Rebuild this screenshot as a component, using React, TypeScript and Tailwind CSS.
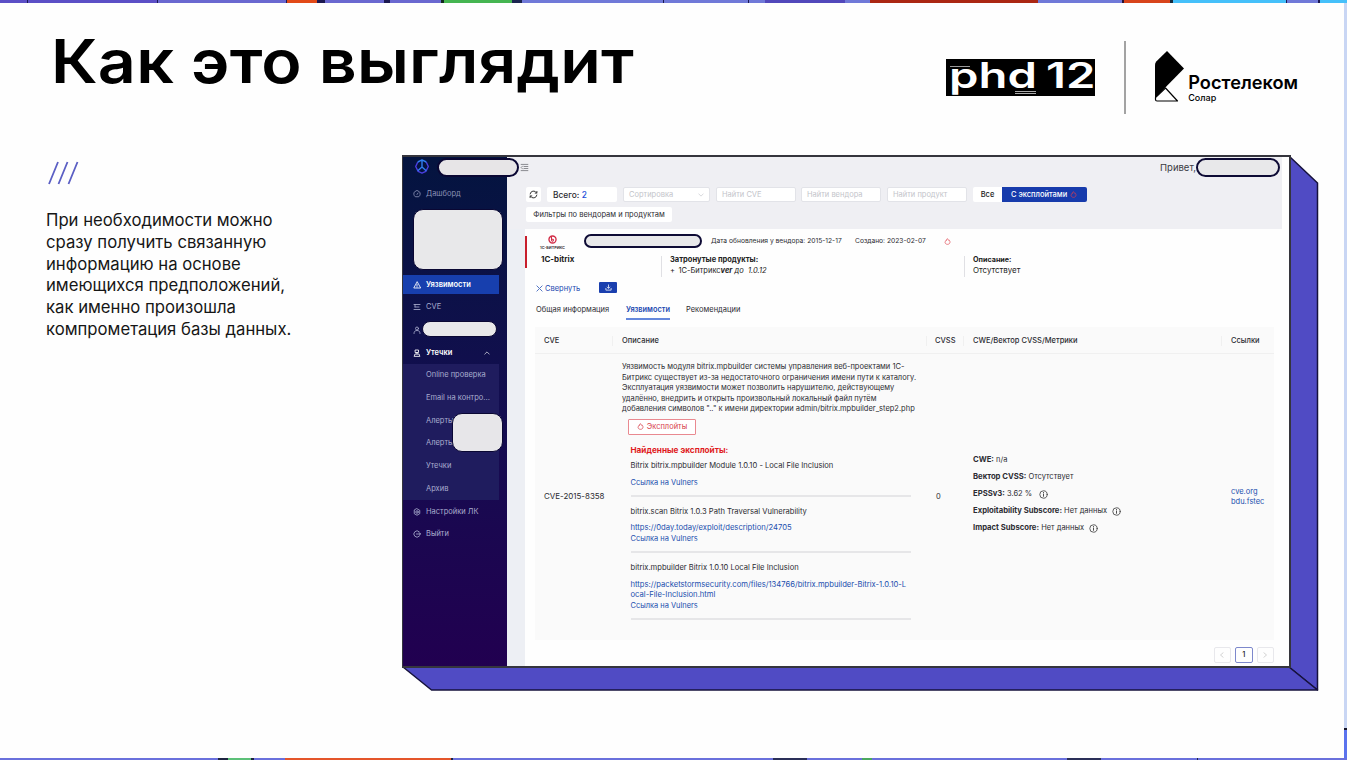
import type { ReactNode } from "react";

const topStrip = [
  "w-[27px] bg-[#5c4fc6]",
  "w-[1px] bg-[#1b1850]",
  "w-[129px] bg-[#5c4fc6]",
  "w-[1px] bg-[#1b1850]",
  "w-[128px] bg-[#6a68d0]",
  "w-[1px] bg-[#1b1850]",
  "w-[30px] bg-[#e24a18]",
  "w-[8px] bg-[#1b1850]",
  "w-[59px] bg-[#6a68d0]",
  "w-[6px] bg-[#1b1850]",
  "w-[51px] bg-[#6a68d0]",
  "w-[3px] bg-[#122b1c]",
  "w-[68px] bg-[#45b551]",
  "w-[10px] bg-[#1b2550]",
  "w-[141px] bg-[#7079d8]",
  "w-[1px] bg-[#1b1850]",
  "w-[84px] bg-[#7079d8]",
  "w-[1px] bg-[#1b1850]",
  "w-[16px] bg-[#7079d8]",
  "w-[80px] bg-[#5248bb]",
  "w-[25px] bg-[#7079d8]",
  "w-[168px] bg-[#ab2713]",
  "w-[84px] bg-[#7079d8]",
  "w-[2px] bg-[#2a1230]",
  "w-[46px] bg-[#d8441b]",
  "w-[3px] bg-[#14293c]",
  "w-[113px] bg-[#45c0fa]",
  "w-[1px] bg-[#1b1850]",
  "w-[31px] bg-[#7079d8]",
  "w-[2px] bg-[#1b1850]",
  "w-[27px] bg-[#45c0fa]",
];

const bottomStrip = [
  "w-[218px] bg-[#6a70dc]",
  "w-[10px] bg-[#1d2440]",
  "w-[23px] bg-[#5cc078]",
  "w-[3px] bg-[#1d2440]",
  "w-[31px] bg-[#6a70dc]",
  "w-[166px] bg-[#e4552a]",
  "w-[2px] bg-[#1d2440]",
  "w-[320px] bg-[#6a70dc]",
  "w-[34px] bg-[#2a2f58]",
  "w-[55px] bg-[#6a70dc]",
  "w-[10px] bg-[#4ba85e]",
  "w-[195px] bg-[#6a70dc]",
  "w-[34px] bg-[#2a2f58]",
  "w-[96px] bg-[#6a70dc]",
  "w-[1px] bg-[#1d2440]",
  "w-[149px] bg-[#6a70dc]",
];

function Stroke({ children, className }: { children: ReactNode; className: string }) {
  return (
    <svg viewBox="0 0 16 16" fill="none" stroke="currentColor" strokeWidth="1.7" strokeLinecap="round" strokeLinejoin="round" className={`shrink-0 ${className}`}>
      {children}
    </svg>
  );
}

function Info() {
  return (
    <Stroke className="h-[9px] w-[9px] text-[#444]">
      <circle cx="8" cy="8" r="6.6" strokeWidth="1.5" />
      <path d="M8 7.2v4M8 4.4v.6" />
    </Stroke>
  );
}

function Fire({ className }: { className: string }) {
  return (
    <Stroke className={className}>
      <path d="M5 5.500C6 5 7.200 3.500 7.500 1.500c2.500 1.500 3 3 3.300 4.200l1.200-.7c1.600 2 2 4 1.500 5.800-.7 2.300-2.800 3.700-5.500 3.700s-4.900-1.400-5.500-3.700C2 9 3.500 7 5 5.500z" />
    </Stroke>
  );
}

function MenuRow({ icon, label, active, bold, dim, arrow }: { icon?: ReactNode; label: string; active?: boolean; bold?: boolean; dim?: boolean; arrow?: boolean }) {
  return (
    <div className={`flex h-[22.7px] items-center ${active || bold ? "font-semibold text-white" : dim ? "text-[#8a90b4]" : "text-[#a9acce]"}`}>
      <div className={`flex w-[96px] items-center pl-[10px] ${active ? "h-[19px] bg-[#173fae]" : "h-full"}`}>
        <span className="w-[13px] shrink-0">{icon}</span>
        <span className="w-[62px] whitespace-nowrap">{label}</span>
        {arrow && (
          <Stroke className="ml-[-4px] h-[6px] w-[6px]">
            <path d="M2 11l6-6 6 6" />
          </Stroke>
        )}
      </div>
    </div>
  );
}

function Sidebar() {
  return (
    <div className="relative w-[104px] shrink-0 bg-linear-to-b from-[#04143f] via-[#130d50] to-[#210050] text-[7.5px] leading-[10px]">
      <div className="flex h-[25.500px] items-start pl-[11px] pt-[2px]">
        <svg viewBox="0 0 16 16" className="h-[15px] w-[16px]" fill="none" strokeWidth="1.5" strokeLinejoin="round">
          <path d="M3.500 3.200L1.300 8l2.600 5.300L8 15l4.100-1.700L14.700 8l-2.200-4.800" stroke="#4a3fe0" />
          <path d="M3.500 3.200L8 1l4.500 2.200M8 1v7.500M8 8.500l-4.500 4M8 8.500l4.500 4" stroke="#2f7ff0" />
        </svg>
      </div>
      <MenuRow
        label="Дашборд"
        dim
        icon={
          <Stroke className="h-[8px] w-[8px]">
            <path d="M4 13a6.500 6.500 0 1 1 8 0zM8 9l2-3" />
          </Stroke>
        }
      />
      <div className="h-[68.100px]" />
      <MenuRow
        label="Уязвимости"
        active
        icon={
          <Stroke className="h-[8px] w-[8px]">
            <path d="M8 2L1.500 14h13zM8 6.500v3.500M8 12v.2" />
          </Stroke>
        }
      />
      <MenuRow
        label="CVE"
        icon={
          <Stroke className="h-[8px] w-[8px]">
            <path d="M2 3h12M4 8h8M2 13h12M4 3v5" />
          </Stroke>
        }
      />
      <MenuRow
        label=""
        icon={
          <Stroke className="h-[8px] w-[8px]">
            <circle cx="8" cy="5" r="3" />
            <path d="M2 15c0-4 2-6 6-6s6 2 6 6" />
          </Stroke>
        }
      />
      <MenuRow
        label="Утечки"
        bold
        arrow
        icon={
          <Stroke className="h-[8px] w-[8px]">
            <path d="M5 2h6v5H5zM2.500 14l1.500-4h8l1.500 4zM8 7v3" />
          </Stroke>
        }
      />
      <div className="mr-[8px] bg-[#1f1c5e]">
        <MenuRow label="Online проверка" />
        <MenuRow label="Email на контро..." />
        <MenuRow label="Алерты" />
        <MenuRow label="Алерты" />
        <MenuRow label="Утечки" />
        <MenuRow label="Архив" />
      </div>
      <MenuRow
        label="Настройки ЛК"
        icon={
          <Stroke className="h-[8px] w-[8px]">
            <path d="M8 1.500l5.500 3.200v6.600L8 14.500l-5.500-3.200V4.700z" />
            <circle cx="8" cy="8" r="2.500" />
          </Stroke>
        }
      />
      <MenuRow
        label="Выйти"
        icon={
          <Stroke className="h-[8px] w-[8px]">
            <path d="M12.500 3.500a6.300 6.300 0 1 0 0 9M7 8h8M12.500 5.500L15 8l-2.500 2.500" />
          </Stroke>
        }
      />
      <div className="absolute left-[34px] top-[1px] z-10 h-[19px] w-[82px] rounded-full border-2 border-[#0a0733] bg-[#e7e5e7]" />
      <div className="absolute left-[10px] top-[52px] h-[61px] w-[90px] rounded-[10px] border border-[#0a0733] bg-[#e8e8ea]" />
      <div className="absolute left-[19px] top-[164px] h-[16px] w-[75px] rounded-full border border-[#0a0733] bg-[#e8e8ea]" />
      <div className="absolute left-[49px] top-[256px] h-[39px] w-[51px] rounded-[10px] border border-[#0a0733] bg-[#e7e6e9]" />
    </div>
  );
}

function Field({ text, width, arrow }: { text: string; width: string; arrow?: boolean }) {
  return (
    <div className={`flex h-[15px] items-center justify-between rounded-[2px] border border-[#e2e3e8] bg-white px-[5px] text-[#c3c4ca] ${width}`}>
      <span>{text}</span>
      {arrow && (
        <Stroke className="h-[6px] w-[6px]">
          <path d="M2 5l6 6 6-6" />
        </Stroke>
      )}
    </div>
  );
}

function Toolbar() {
  return (
    <div className="mr-[7px] h-[72px] bg-[#efeff3]">
      <div className="flex h-[21px] items-center">
        <Stroke className="ml-[13px] h-[9px] w-[9px] text-[#85868c]">
          <path d="M2 2.500h12M7 6.200h7M7 9.800h7M2 13.500h12M4.500 5.500L2 8l2.500 2.500" />
        </Stroke>
        <span className="ml-[631px] text-[9.5px] text-[#3b3b42]">Привет,</span>
      </div>
      <div className="flex items-center pl-[19px] pt-[9px]">
        <div className="flex h-[15px] w-[15px] items-center justify-center rounded-[2px] bg-white">
          <Stroke className="h-[9px] w-[9px] text-[#333]">
            <path d="M2 7a6.200 6.200 0 0 1 11.500-2M14 9a6.200 6.200 0 0 1-11.500 2M14 2.500V5.500h-3M2 13.500v-3h3" />
          </Stroke>
        </div>
        <div className="ml-[6px] flex h-[15px] w-[70px] items-center rounded-[2px] bg-white pl-[6px] text-[8.400px] font-medium text-[#2c2c32]">
          Всего:&nbsp;<span className="text-[#2450d8]">2</span>
        </div>
        <Field text="Сортировка" width="ml-[6px] w-[87px]" arrow />
        <Field text="Найти CVE" width="ml-[6px] w-[80px]" />
        <Field text="Найти вендора" width="ml-[5px] w-[80px]" />
        <Field text="Найти продукт" width="ml-[6px] w-[80px]" />
        <div className="ml-[6px] flex h-[15px] w-[29px] items-center justify-center rounded-l-[2px] bg-white font-medium text-[#222]">Все</div>
        <div className="flex h-[15px] w-[85px] items-center rounded-r-[2px] bg-[#173bac] pl-[9px] font-medium text-white">
          С эксплойтами
          <Fire className="ml-[3px] h-[7px] w-[7px] text-[#d03a55]" />
        </div>
      </div>
      <div className="ml-[19px] mt-[5px] flex h-[15px] w-[146px] items-center justify-center rounded-[2px] bg-white text-[#2c2c32]">
        Фильтры по вендорам и продуктам
      </div>
    </div>
  );
}

function Summary() {
  return (
    <div className="relative">
      <div className="absolute left-0 top-[7px] h-[32px] w-[2px] bg-[#c81e2c]" />
      <div className="flex h-[24px] items-center">
        <div className="ml-[15px] flex w-[25px] flex-col items-center pt-[2px]">
          <svg viewBox="0 0 16 16" className="h-[9px] w-[9px]" fill="none" stroke="#d22a45" strokeWidth="2.400">
            <circle cx="8" cy="8" r="6.300" />
            <path d="M6.200 3v4.500M6.200 7.500h2.500a1.800 1.800 0 1 1-2.500 1.500z" strokeWidth="1.800" />
          </svg>
          <span className="mt-px whitespace-nowrap text-[3.800px] font-bold leading-[5px] text-[#443338]">1С-БИТРИКС</span>
        </div>
        <div className="ml-[19px] h-[14px] w-[118px] rounded-full border-2 border-[#0e0b35] bg-[#e8e8ea]" />
        <div className="ml-[9px] flex items-center text-[6.700px] text-[#2c2c32]">
          <span className="w-[144px]">Дата обновления у вендора: 2015-12-17</span>
          <span className="w-[89px]">Создано: 2023-02-07</span>
          <Fire className="h-[7px] w-[7px] text-[#e2555f]" />
        </div>
      </div>
      <div className="flex h-[27px] leading-[11px] text-[#222]">
        <div className="w-[135.500px] pl-[16px] pt-[1px] text-[8px] font-bold">1C-bitrix</div>
        <div className="mt-[3px] h-[21px] w-px bg-[#e0e0e4]" />
        <div className="w-[302px] pl-[8.500px] pt-[1px]">
          <div className="font-bold">Затронутые продукты:</div>
          <div className="flex">
            <span className="w-[8.500px]">+</span>
            <span>1С-Битрикс</span>
            <i>
              <b>ver</b>&nbsp;до&nbsp;&nbsp;1.0.12
            </i>
          </div>
        </div>
        <div className="mt-[3px] h-[21px] w-px bg-[#e0e0e4]" />
        <div className="pl-[8.500px] pt-[1px]">
          <div className="text-[7.200px] font-bold">Описание:</div>
          <div className="text-[7.900px]">Отсутствует</div>
        </div>
      </div>
      <div className="flex h-[15px] items-center pl-[11px] pt-[2px] text-[#1a48b0]">
        <Stroke className="h-[7px] w-[7px]">
          <path d="M2 2l5 5M14 2L9 7M2 14l5-5M14 14L9 9" />
        </Stroke>
        <span className="ml-[2px] w-[54px]">Свернуть</span>
        <div className="mt-[-3px] flex h-[11px] w-[18px] items-center justify-center rounded-[1px] bg-[#1a3fae]">
          <Stroke className="h-[7px] w-[7px] text-white">
            <path d="M8 2v7M5 7l3 3 3-3M2 10v4h12v-4" />
          </Stroke>
        </div>
      </div>
    </div>
  );
}

function Tabs() {
  return (
    <div className="flex h-[26px] items-start pl-[11px] pt-[8px] text-[#2c2c32]">
      <span className="h-[16px] w-[90px] leading-[14px]">Общая информация</span>
      <span className="h-[17px] w-[44px] border-b-2 border-[#6487dc] text-[7.350px] font-semibold leading-[14px] text-[#1a48b0]">Уязвимости</span>
      <span className="ml-[16px] leading-[14px]">Рекомендации</span>
    </div>
  );
}

function Exploit({ title, links }: { title: string; links: string[] }) {
  return (
    <>
      <div className="text-[7.600px] leading-[10px]">{title}</div>
      <div className="mt-[6.800px] w-[280px] border-b-2 border-[#e6e6e8] pb-[6.400px] text-[7.650px] leading-[10.500px] text-[#1a4fae]">
        {links.map((l) => (
          <div key={l}>{l}</div>
        ))}
        <div className="text-[7.450px]">Ссылка на Vulners</div>
      </div>
    </>
  );
}

function Metric({ name, value, info, gap }: { name: string; value: string; info?: boolean; gap?: string }) {
  return (
    <div className="flex h-[17.100px] items-center">
      <b className="text-[7.700px]">{name}</b>&nbsp;{value}
      {info && (
        <span className={gap}>
          <Info />
        </span>
      )}
    </div>
  );
}

function Table() {
  return (
    <div className="ml-[10px] w-[739px] bg-[#fafafa] text-[#2c2c32]">
      <div className="flex h-[27px] items-center border-b border-[#f0f0f0] pt-px font-medium">
        <span className="w-[78px] border-r border-[#f0f0f0] pl-[9px]">CVE</span>
        <span className="w-[313px] pl-[9px]">Описание</span>
        <span className="w-[38px] border-x border-[#f0f0f0] pl-[8px]">CVSS</span>
        <span className="w-[258px] border-r border-[#f0f0f0] pl-[9px]">CWE/Вектор CVSS/Метрики</span>
        <span className="pl-[9px]">Ссылки</span>
      </div>
      <div className="flex h-[286px]">
        <div className="flex w-[78px] items-center pb-[2px] pl-[9px] text-[7.950px]">CVE-2015-8358</div>
        <div className="w-[313px] pl-[9px] pt-[8px]">
          <div className="w-[300px] leading-[10.500px]">
            Уязвимость модуля bitrix.mpbuilder системы управления веб-проектами 1С-
            <br />
            Битрикс существует из-за недостаточного ограничения имени пути к каталогу.
            <br />
            Эксплуатация уязвимости может позволить нарушителю, действующему
            <br />
            удалённо, внедрить и открыть произвольный локальный файл путём
            <br />
            добавления символов ".." к имени директории admin/bitrix.mpbuilder_step2.php
          </div>
          <div className="ml-[6px] mt-[4px] flex h-[16px] w-[68px] items-center justify-center gap-[3px] rounded-[1px] border border-[#e98990] bg-white text-[#d8434e]">
            <Fire className="h-[7px] w-[7px]" />
            Эксплойты
          </div>
          <div className="pl-[8.500px] pt-[10px]">
            <div className="mb-[6.500px] text-[8.200px] font-bold leading-[10px] text-[#e01b22]">Найденные эксплойты:</div>
            <Exploit title="Bitrix bitrix.mpbuilder Module 1.0.10 - Local File Inclusion" links={[]} />
            <div className="h-[10px]" />
            <Exploit title="bitrix.scan Bitrix 1.0.3 Path Traversal Vulnerability" links={["https://0day.today/exploit/description/24705"]} />
            <div className="h-[10px]" />
            <Exploit
              title="bitrix.mpbuilder Bitrix 1.0.10 Local File Inclusion"
              links={["https://packetstormsecurity.com/files/134766/bitrix.mpbuilder-Bitrix-1.0.10-L", "ocal-File-Inclusion.html"]}
            />
          </div>
        </div>
        <div className="flex w-[38px] items-center pl-[10px]">0</div>
        <div className="flex w-[258px] flex-col justify-center pb-[6px] pl-[9px]">
          <Metric name="CWE:" value="n/a" />
          <Metric name="Вектор CVSS:" value="Отсутствует" />
          <Metric name="EPSSv3:" value="3.62 %" info gap="ml-[7px]" />
          <Metric name="Exploitability Subscore:" value="Нет данных" info gap="ml-[5px]" />
          <Metric name="Impact Subscore:" value="Нет данных" info gap="ml-[5px]" />
        </div>
        <div className="flex flex-col justify-center pl-[9px] leading-[10.500px] text-[#1a4fae]">
          <span>cve.org</span>
          <span>bdu.fstec</span>
        </div>
      </div>
    </div>
  );
}

function Pager() {
  return (
    <div className="mr-[15px] mt-[7px] flex justify-end gap-[4px]">
      <div className="flex h-[16px] w-[17.500px] items-center justify-center rounded-[2px] border border-[#e8e8ec] text-[#bbb]">
        <Stroke className="h-[6px] w-[6px]">
          <path d="M11 2L4 8l7 6" />
        </Stroke>
      </div>
      <div className="flex h-[16px] w-[17.500px] items-center justify-center rounded-[2px] border border-[#7d88cc] font-medium text-[#222]">1</div>
      <div className="flex h-[16px] w-[17.500px] items-center justify-center rounded-[2px] border border-[#e8e8ec] text-[#bbb]">
        <Stroke className="h-[6px] w-[6px]">
          <path d="M5 2l7 6-7 6" />
        </Stroke>
      </div>
    </div>
  );
}

function Frame() {
  return (
    <div className="relative h-[537px] w-[917px]">
      <svg className="absolute inset-0" width="917" height="537" viewBox="0 0 917 537" stroke="#16123c" strokeWidth="1.500" strokeLinejoin="round">
        <path d="M887 1l28.500 27v507L887 512z" fill="#504bc4" />
        <path d="M1 512h886l28.500 23H29.500z" fill="#504bc4" />
      </svg>
      <div className="relative flex h-[513px] w-[889px] border border-b-2 border-r-2 border-t-2 border-[#35353d] bg-[#fefefe]">
        <Sidebar />
        <div className="relative flex min-w-0 flex-1 flex-col">
          <Toolbar />
          <div className="flex flex-1">
            <div className="w-[18px] shrink-0 bg-[#edeff4]" />
            <div className="min-w-0 flex-1 whitespace-nowrap">
              <Summary />
              <Tabs />
              <div className="h-[6px]" />
              <Table />
              <Pager />
            </div>
          </div>
          <div className="absolute right-[9px] top-[1px] h-[19px] w-[84px] rounded-full border-2 border-[#0e0b35] bg-[#e8e8ea]" />
        </div>
      </div>
    </div>
  );
}

function Logos() {
  return (
    <div className="flex items-start">
      <div className="relative mt-[18px] h-[37px] w-[149px] bg-black text-white">
        <div className="flex h-[37px] pl-[3px] text-[35px] font-semibold leading-[33px]">
          <span className="w-[97px] origin-left scale-x-[1.350]">phd</span>
          <span className="origin-left scale-x-[1.350]">12</span>
        </div>
        <div className="absolute left-[4px] top-[7px] h-px w-[20px] bg-[#999]" />
        <div className="absolute left-[69px] top-[32px] h-[3px] w-[21px] border-y border-[#aaa]" />
      </div>
      <div className="ml-[29px] h-[73px] w-[2px] bg-[#a3a3a3]" />
      <svg className="ml-[28px] mt-[10px]" width="32" height="52" viewBox="0 0 32 52">
        <path d="M13 0l17 17.500L1 47V14.500C1 12.500 1.500 11.500 2.500 10.300z" fill="#000" />
        <path d="M11.500 37L1.500 46.500v2q0 1.500 1.500 1.500h20.500z" fill="none" stroke="#000" strokeWidth="1.200" strokeLinejoin="round" />
      </svg>
      <div className="ml-[2px] mt-[30px]">
        <div className="text-[18.200px] font-semibold leading-[22px]">Ростелеком</div>
        <div className="text-[9px] font-medium leading-[10px]">Солар</div>
      </div>
    </div>
  );
}

export default function App() {
  return (
    <div className="flex h-[760px] w-[1347px] flex-col overflow-hidden bg-[#fefefe] font-['Inter','Liberation_Sans',sans-serif] text-[7.500px] leading-[10px] text-black">
      <div className="flex h-[3px] shrink-0">
        {topStrip.map((c, i) => (
          <div key={i} className={c} />
        ))}
      </div>
      <div className="flex min-h-0 flex-1">
        <div className="flex min-w-0 flex-1 flex-col">
          <header className="flex h-[152px] shrink-0 justify-between pl-[51px] pr-[46px] pt-[38px]">
            <h1 className="mt-[-16px] origin-left scale-x-[1.105] whitespace-nowrap text-[60px] font-semibold leading-[72px] tracking-[0.200px]">Как это выглядит</h1>
            <Logos />
          </header>
          <div className="flex">
            <div className="w-[402px] shrink-0 pl-[46px] pt-[6px]">
              <svg className="ml-px" width="34" height="24" viewBox="0 0 34 24" stroke="#5b5fc4" strokeWidth="1.800">
                <path d="M2 23L11 1M11.500 23l9-22M21.500 23l9-22" />
              </svg>
              <p className="mt-[25px] whitespace-nowrap text-[16.700px] leading-[21.800px] text-[#161616]">
                При необходимости можно
                <br />
                сразу получить связанную
                <br />
                информацию на основе
                <br />
                имеющихся предположений,
                <br />
                как именно произошла
                <br />
                компрометация базы данных.
              </p>
            </div>
            <Frame />
          </div>
        </div>
        <div className="flex w-[3px] shrink-0 flex-col bg-[#c9d6f4]">
          <div className="mt-auto h-[2px] bg-[#15152c]" />
          <div className="h-[28px] bg-[#5b73ee]" />
        </div>
      </div>
      <div className="flex h-[2px] shrink-0">
        {bottomStrip.map((c, i) => (
          <div key={i} className={c} />
        ))}
      </div>
    </div>
  );
}
